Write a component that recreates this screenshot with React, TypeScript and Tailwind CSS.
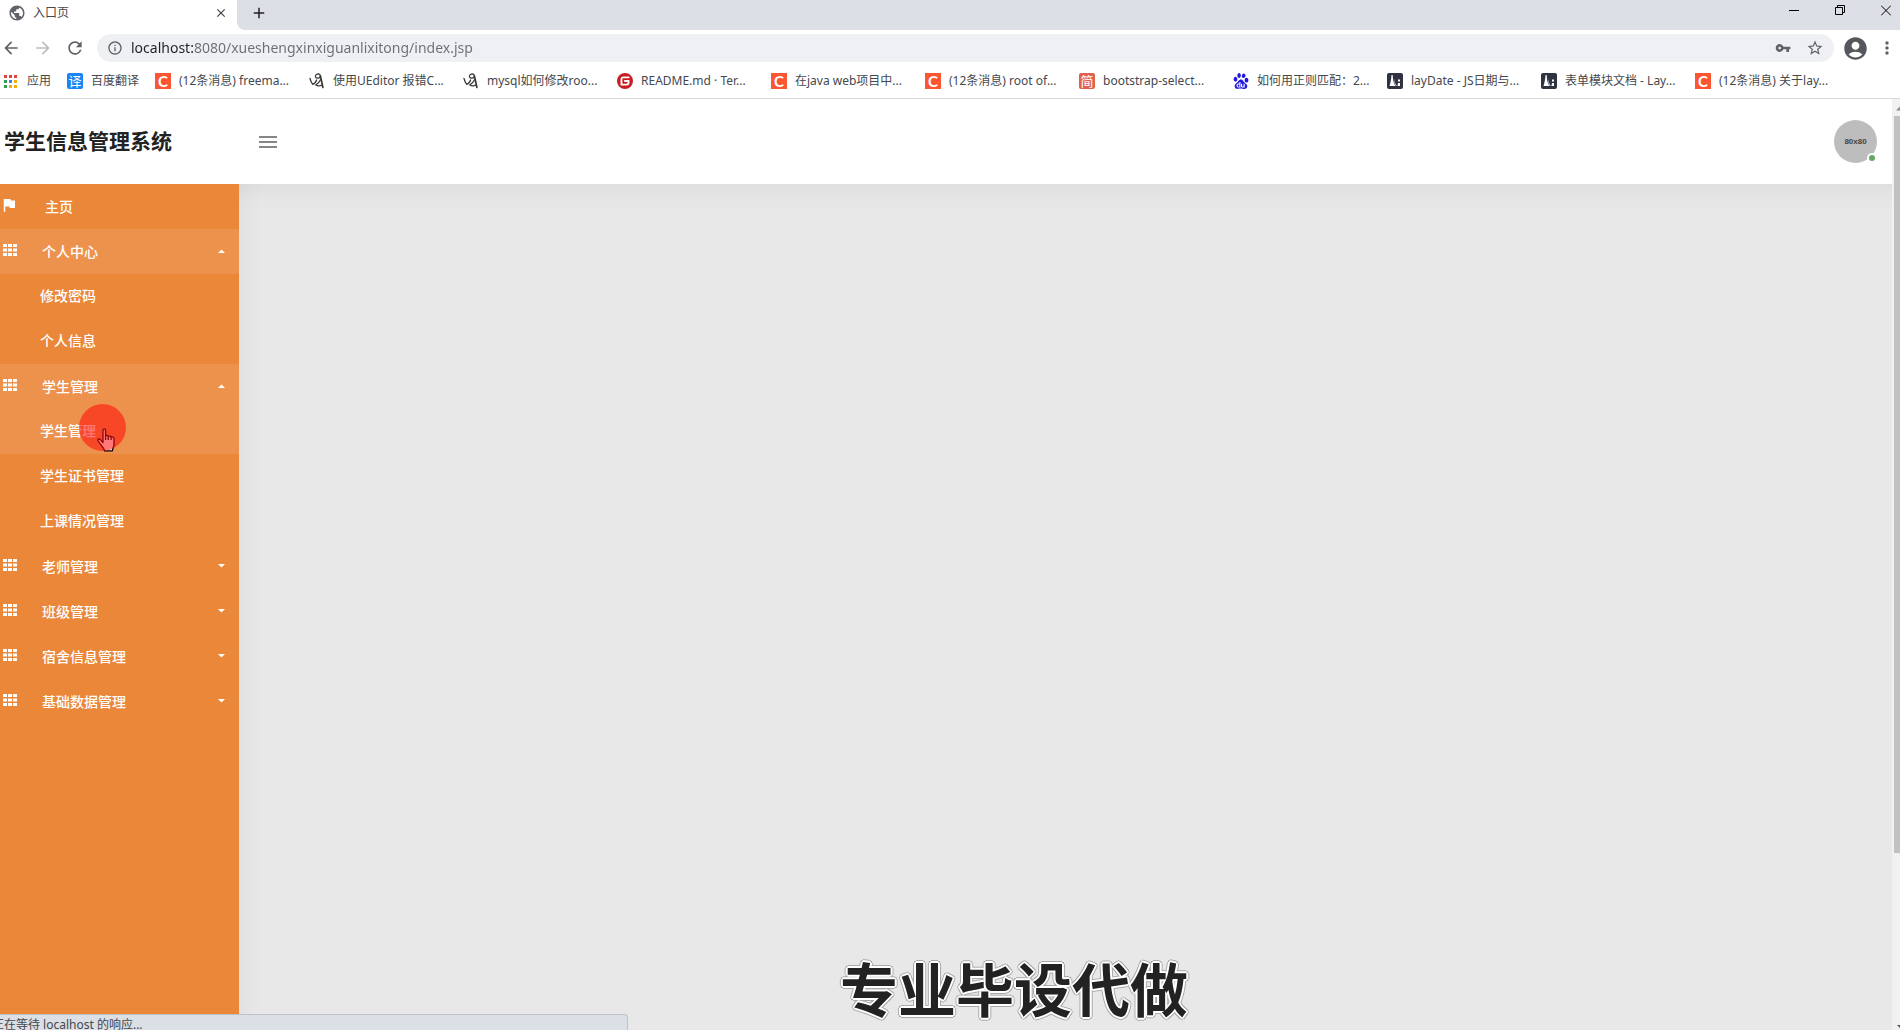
import React, { useState } from "react";
import clsx from "clsx";
import {
  MdAccountCircle,
  MdArrowBack,
  MdArrowForward,
  MdClose,
  MdFlag,
  MdInfoOutline,
  MdMoreVert,
  MdAdd,
  MdPublic,
  MdRefresh,
  MdStarBorder,
  MdVpnKey,
} from "react-icons/md";
import { SiBaidu, SiGitee } from "react-icons/si";

interface Bookmark {
  label: string;
  icon: React.ReactNode;
}

interface MenuGroup {
  label: string;
  children: string[];
}

const CsdnIcon = () => (
  <span className="flex size-4 items-center justify-center bg-[#fc5531] font-['Lato'] text-[15px] leading-4 font-bold text-white">
    C
  </span>
);

const UEditorIcon = () => (
  <svg viewBox="0 0 16 16" className="size-4" fill="none" stroke="#3a3a3a" strokeLinecap="round">
    <path d="M1 5.500c.5 2 1.200 4.300 2.700 5.800C5.500 10.800 7 9 7.600 7" strokeWidth="1.300" />
    <path d="M9.500.9C7.400.9 6 2.400 6.500 3.900c.6 1.500 3.600 1.600 4.600.2.600-1.400-.1-2.900-1.600-3.200z" strokeWidth="1.300" />
    <path d="M11.300 2.800c.9 3 1.500 7 2.600 11.700" strokeWidth="1.700" />
    <path d="M11.800 6.500c-1 2-2.800 4-5 5.500 2.200 1.200 4 1 6 .2" strokeWidth="1.300" />
  </svg>
);

const LayuiIcon = () => (
  <svg viewBox="0 0 16 16" className="size-4">
    <rect width="16" height="16" rx="2" fill="#2f3240" />
    <path d="M2.500 13c1-3 1.700-6.500 2-11h1.200c.1 4 .8 8 2.600 11z" fill="#fff" />
    <path d="M7.200 5.500c.3 3 1 5.500 2.600 7.500H8.900C7.600 11 7 8.500 7.200 5.500z" fill="#fff" />
    <path d="M11 6.500h2v2h-2zM11 10h2v3h-2.500z" fill="#fff" />
  </svg>
);

const AppsIcon = () => (
  <svg viewBox="0 0 13 13" className="size-[13px]">
    <path d="M0 0h3v3H0zM5 0h3v3H5zM10 0h3v3h-3z" fill="#e0433a" />
    <path d="M0 5h3v3H0zM0 10h3v3H0z" fill="#2e9e56" />
    <path d="M5 5h3v3H5z" fill="#3b82f0" />
    <path d="M10 5h3v3h-3zM5 10h3v3H5zM10 10h3v3h-3z" fill="#f2ac0c" />
  </svg>
);

const GridIcon = () => (
  <svg viewBox="0 0 14 12" className="h-3 w-[14px]" fill="#fff">
    <path d="M0 0h4v3H0zM5 0h4v3H5zM10 0h4v3h-4zM0 4.500h4v3H0zM5 4.500h4v3H5zM10 4.500h4v3h-4zM0 9h4v3H0zM5 9h4v3H5zM10 9h4v3h-4z" />
  </svg>
);

const HandCursor = () => (
  <svg viewBox="0 0 18 24" className="h-6 w-[18px]" fill="#fff" stroke="#000" strokeWidth="1.300" strokeLinejoin="round">
    <path d="M6 14.500V2.200C6 .4 8.600.4 8.600 2.200V8c.4-1 2.700-.9 2.700.6.500-.9 2.800-.700 2.800.7.600-.7 2.900-.4 2.900 1.300v5.900c0 2.500-1.600 3.500-1.600 6.300H7.600C7 19.500 2.600 15.800 1 12.800c-.6-1.500 1-2.400 2.300-1.200z" />
    <path d="M8.600 7.500v4.500M11.300 8.500V12M14.100 9.500V12" />
  </svg>
);

const bookmarks: Bookmark[] = [
  { label: "(12条消息) freema...", icon: <CsdnIcon /> },
  { label: "使用UEditor 报错C...", icon: <UEditorIcon /> },
  { label: "mysql如何修改roo...", icon: <UEditorIcon /> },
  { label: "README.md · Ter...", icon: <SiGitee className="size-4 text-[#c71d23]" /> },
  { label: "在java web项目中...", icon: <CsdnIcon /> },
  { label: "(12条消息) root of...", icon: <CsdnIcon /> },
  {
    label: "bootstrap-select...",
    icon: (
      <span className="flex size-4 items-center justify-center rounded-xs bg-[#e0624e] text-[13px] leading-4 text-white">
        简
      </span>
    ),
  },
  { label: "如何用正则匹配：2...", icon: <SiBaidu className="size-4 text-[#2319dc]" /> },
  { label: "layDate - JS日期与...", icon: <LayuiIcon /> },
  { label: "表单模块文档 - Lay...", icon: <LayuiIcon /> },
  { label: "(12条消息) 关于lay...", icon: <CsdnIcon /> },
];

const menu: MenuGroup[] = [
  { label: "个人中心", children: ["修改密码", "个人信息"] },
  { label: "学生管理", children: ["学生管理", "学生证书管理", "上课情况管理"] },
  { label: "老师管理", children: ["老师管理"] },
  { label: "班级管理", children: ["班级管理"] },
  { label: "宿舍信息管理", children: ["宿舍信息管理"] },
  { label: "基础数据管理", children: ["基础数据管理"] },
];

export default function App() {
  return (
    <div className="relative flex h-screen flex-col overflow-hidden bg-white font-['Noto_Sans','Noto_Sans_CJK_SC',sans-serif]">
      <TabStrip />
      <Toolbar />
      <BookmarkBar />
      <div className="flex min-h-0 flex-1">
        <div className="flex min-w-0 flex-1 flex-col">
          <Header />
          <div className="flex min-h-0 flex-1 bg-[#e8e8e8]">
            <Sidebar />
            <main className="flex-1 shadow-[inset_0_30px_30px_-30px_rgba(0,0,0,0.08),inset_30px_0_30px_-30px_rgba(0,0,0,0.06)]" />
          </div>
        </div>
        <ScrollTrack />
      </div>
      <p className="absolute bottom-0 left-[44%] pl-1 text-[58px] leading-[80px] font-bold whitespace-nowrap text-[#222] [text-shadow:2px_0_#fff,-2px_0_#fff,0_2px_#fff,0_-2px_#fff,1px_1px_#fff,-1px_1px_#fff,1px_-1px_#fff,-1px_-1px_#fff,3px_0_#aaa,-3px_0_#aaa,0_3px_#aaa,0_-3px_#aaa,2px_2px_#aaa,-2px_2px_#aaa,2px_-2px_#aaa,-2px_-2px_#aaa]">
        专业毕设代做
      </p>
      <div className="absolute bottom-0 left-0 flex h-4 w-[628px] overflow-hidden rounded-tr-sm border-t border-r border-[#bfc1c4] bg-[#dbdfe6]">
        <span className="-ml-2 text-xs leading-5 whitespace-nowrap text-[#45484d]">正在等待 localhost 的响应...</span>
      </div>
    </div>
  );
}

function TabStrip() {
  return (
    <div className="flex h-[30px] shrink-0 bg-[#dcdfe6]">
      <div className="flex w-[237px] items-center bg-white pr-[9px] pb-1 pl-2">
        <MdPublic className="size-[18px] text-[#5f6368]" />
        <span className="ml-[7px] flex-1 text-xs text-[#45484d]">入口页</span>
        <button type="button" aria-label="关闭标签页">
          <MdClose className="size-[14px] text-[#3c4043]" />
        </button>
      </div>
      <div className="flex flex-1 bg-white">
        <div className="flex flex-1 items-start justify-between rounded-bl-lg bg-[#dcdfe6]">
          <button type="button" aria-label="新标签页" className="mt-1 ml-[13px]">
            <MdAdd className="size-[18px] text-[#202124]" />
          </button>
          <div className="flex gap-9 pt-1 pr-[9px]">
            <button type="button" aria-label="最小化">
              <svg viewBox="0 0 10 12" className="h-3 w-[10px]" stroke="#000">
                <path d="M0 6.500h10" />
              </svg>
            </button>
            <button type="button" aria-label="还原">
              <svg viewBox="0 0 10 12" className="h-3 w-[10px]" fill="none" stroke="#000">
                <path d="M.5 3.500h7v7h-7zM2.500 3.500v-2h7v7h-2" />
              </svg>
            </button>
            <button type="button" aria-label="关闭">
              <svg viewBox="0 0 10 12" className="h-3 w-[10px]" stroke="#000">
                <path d="M0 1.500l10 10M10 1.500l-10 10" />
              </svg>
            </button>
          </div>
        </div>
      </div>
    </div>
  );
}

function Toolbar() {
  return (
    <div className="flex h-9 shrink-0 items-center pr-[3px]">
      <div className="flex w-[97px] items-center gap-3 pl-px">
        <button type="button" aria-label="后退">
          <MdArrowBack className="size-5 text-[#5f6368]" />
        </button>
        <button type="button" aria-label="前进">
          <MdArrowForward className="size-5 text-[#bbbdc0]" />
        </button>
        <button type="button" aria-label="重新加载">
          <MdRefresh className="size-5 text-[#5f6368]" />
        </button>
      </div>
      <div className="flex h-7 flex-1 items-center rounded-full bg-[#eff0f4] pr-[10px] pl-[10px]">
        <MdInfoOutline className="size-4 text-[#5f6368]" />
        <input
          aria-label="地址"
          defaultValue="localhost:8080/xueshengxinxiguanlixitong/index.jsp"
          className="ml-2 flex-1 bg-[linear-gradient(90deg,#202124_62px,#6b6e73_62px)] bg-clip-text text-sm text-transparent outline-none"
        />
        <button type="button" aria-label="密码">
          <MdVpnKey className="size-4 text-[#5f6368]" />
        </button>
        <button type="button" aria-label="收藏" className="ml-[15px]">
          <MdStarBorder className="size-[18px] text-[#5f6368]" />
        </button>
      </div>
      <button type="button" aria-label="用户" className="ml-2">
        <MdAccountCircle className="size-[27px] text-[#54575c]" />
      </button>
      <button type="button" aria-label="更多" className="ml-2">
        <MdMoreVert className="size-5 text-[#5f6368]" />
      </button>
    </div>
  );
}

function BookmarkBar() {
  return (
    <nav className="flex h-[33px] shrink-0 items-center overflow-hidden border-b border-[#d8d9e0] pb-[2px] pl-1 text-xs text-[#45484d]">
      <a href="#" className="flex w-[63px] shrink-0 items-center gap-[10px]">
        <AppsIcon />
        应用
      </a>
      <a href="#" className="flex w-[88px] shrink-0 items-center gap-2">
        <span className="flex size-4 items-center justify-center rounded-xs bg-[#1985f5] text-[13px] leading-4 text-white">
          译
        </span>
        百度翻译
      </a>
      {bookmarks.map((item) => (
        <a key={item.label} href="#" className="flex w-[154px] shrink-0 items-center gap-2 whitespace-nowrap">
          {item.icon}
          {item.label}
        </a>
      ))}
    </nav>
  );
}

function Header() {
  return (
    <header className="flex h-[85px] shrink-0 items-center bg-white pr-[15px] pl-1">
      <h1 className="w-[255px] text-[21px] font-bold text-[#222]">学生信息管理系统</h1>
      <button type="button" aria-label="菜单" className="flex flex-col gap-[3px]">
        <span className="h-[2px] w-[18px] bg-[#868686]" />
        <span className="h-[2px] w-[18px] bg-[#868686]" />
        <span className="h-[2px] w-[18px] bg-[#868686]" />
      </button>
      <div className="relative ml-auto flex size-[43px] items-center justify-center rounded-full bg-[#bdbdbd] font-['Liberation_Sans'] text-[8px] font-bold text-[#444]">
        80x80
        <span className="absolute right-0 bottom-0 size-[10px] rounded-full border-2 border-white bg-[#66a866]" />
      </div>
    </header>
  );
}

function Sidebar() {
  const [open, setOpen] = useState(["个人中心", "学生管理"]);

  const toggle = (label: string) => {
    setOpen(open.includes(label) ? open.filter((l) => l !== label) : [...open, label]);
  };

  return (
    <aside className="w-[239px] bg-[#eb8739] text-sm font-medium text-white">
      <a href="#" className="flex h-[45px] items-center">
        <MdFlag className="-mt-1 size-[18px]" />
        <span className="ml-[27px]">主页</span>
      </a>
      <ul>
        {menu.map((group) => {
          const expanded = open.includes(group.label);
          return (
            <li key={group.label}>
              <button
                type="button"
                aria-expanded={expanded}
                onClick={() => toggle(group.label)}
                className={clsx("flex h-[45px] w-full items-center pr-[14px] pl-[3px]", expanded && "bg-[#ed924d]")}
              >
                <span className="-mt-1">
                  <GridIcon />
                </span>
                <span className="ml-[25px] flex-1 text-left">{group.label}</span>
                <svg viewBox="0 0 7 4" className={clsx("-mt-[2px] h-1 w-[7px]", expanded && "rotate-180")} fill="#fff">
                  <path d="M0 0h7L3.500 3.500z" />
                </svg>
              </button>
              {expanded && (
                <ul>
                  {group.children.map((child) => {
                    const hovered = child === "学生管理";
                    return (
                      <li key={child} className="relative">
                        <a
                          href="#"
                          className={clsx("flex h-[45px] items-center pb-[2px] pl-10", hovered && "bg-[#ed924d]")}
                        >
                          {child}
                        </a>
                        {hovered && <Pointer />}
                      </li>
                    );
                  })}
                </ul>
              )}
            </li>
          );
        })}
      </ul>
    </aside>
  );
}

function Pointer() {
  return (
    <div className="pointer-events-none absolute -top-[5px] left-[79px] z-20 size-[47px]">
      <div className="absolute top-6 left-[18px]">
        <HandCursor />
      </div>
      <div className="absolute inset-0 rounded-full bg-[#ff0a08]/55" />
    </div>
  );
}

function ScrollTrack() {
  return (
    <div className="flex w-2 shrink-0 flex-col bg-[#f1f1f1] pl-[2px]">
      <svg viewBox="0 0 6 17" className="h-[17px] w-[6px] shrink-0" fill="#8a8a8a">
        <path d="M2 11.500l4-4v4z" />
      </svg>
      <div className="h-[737px] bg-[#c1c1c1]" />
      <svg viewBox="0 0 6 17" className="mt-auto h-[17px] w-[6px] shrink-0" fill="#505050">
        <path d="M3 12h3v3z" />
      </svg>
    </div>
  );
}
